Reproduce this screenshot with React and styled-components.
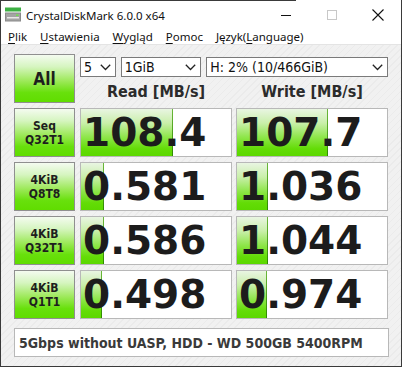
import React from 'react';
import styled, { createGlobalStyle } from 'styled-components';

const GlobalStyle = createGlobalStyle`
  body {
    margin: 0;
    background: #fff;
  }
`;

const rows = [
  { top: 'Seq', bottom: 'Q32T1', read: '108.4', write: '107.7', readFill: 91, writeFill: 90 },
  { top: '4KiB', bottom: 'Q8T8', read: '0.581', write: '1.036', readFill: 22, writeFill: 30 },
  { top: '4KiB', bottom: 'Q32T1', read: '0.586', write: '1.044', readFill: 22, writeFill: 30 },
  { top: '4KiB', bottom: 'Q1T1', read: '0.498', write: '0.974', readFill: 20, writeFill: 29 },
];

const menu = [
  { key: 'P', rest: 'lik' },
  { key: 'U', rest: 'stawienia' },
  { key: 'W', rest: 'ygląd' },
  { key: 'P', rest: 'omoc' },
  { before: 'Język(', key: 'L', rest: 'anguage)' },
];

const App = () => {
  return (
    <>
      <GlobalStyle />
      <StyledWindow>
        <StyledTitleBar>
          <AppIcon />
          <StyledTitle>CrystalDiskMark 6.0.0 x64</StyledTitle>
          <StyledControls>
            <StyledControl>
              <svg width='12' height='12' viewBox='0 0 12 12'>
                <line x1='1' y1='6.5' x2='11' y2='6.5' stroke='#111' strokeWidth='1' />
              </svg>
            </StyledControl>
            <StyledControl>
              <svg width='12' height='12' viewBox='0 0 12 12'>
                <rect x='1.5' y='1.5' width='9' height='9' fill='none' stroke='#c8c8c8' strokeWidth='1' />
              </svg>
            </StyledControl>
            <StyledControl>
              <svg width='14' height='14' viewBox='0 0 14 14'>
                <path d='M1.5 1.5 L12.5 12.5 M12.5 1.5 L1.5 12.5' stroke='#111' strokeWidth='1.1' />
              </svg>
            </StyledControl>
          </StyledControls>
        </StyledTitleBar>

        <StyledMenuBar>
          {menu.map((m, i) => (
            <StyledMenuItem key={i}>
              {m.before}
              <StyledAccel>{m.key}</StyledAccel>
              {m.rest}
            </StyledMenuItem>
          ))}
        </StyledMenuBar>

        <StyledContent>
          <StyledGrid>
            <StyledTestButton $big>All</StyledTestButton>
            <StyledTopArea>
              <StyledSelects>
                <Select width={36} label='5' />
                <Select width={81} label='1GiB' />
                <Select width={183} label='H: 2% (10/466GiB)' />
              </StyledSelects>
              <StyledHeaders>
                <StyledHeader>Read [MB/s]</StyledHeader>
                <StyledHeader>Write [MB/s]</StyledHeader>
              </StyledHeaders>
            </StyledTopArea>

            {rows.map((r, i) => (
              <React.Fragment key={i}>
                <StyledTestButton>
                  {r.top}
                  <br />
                  {r.bottom}
                </StyledTestButton>
                <StyledResult style={{ '--fill': `${r.readFill}px` }}>{r.read}</StyledResult>
                <StyledResult style={{ '--fill': `${r.writeFill}px` }}>{r.write}</StyledResult>
              </React.Fragment>
            ))}
          </StyledGrid>
          <StyledComment>5Gbps without UASP, HDD - WD 500GB 5400RPM</StyledComment>
        </StyledContent>
      </StyledWindow>
    </>
  );
};

const Select = ({ width, label }) => (
  <StyledSelect width={width}>
    <span>{label}</span>
    <svg width='11' height='7' viewBox='0 0 11 7'>
      <polyline points='0.8,0.8 5.5,5.5 10.2,0.8' fill='none' stroke='#222' strokeWidth='1.3' />
    </svg>
  </StyledSelect>
);

const AppIcon = () => (
  <svg width='16' height='16' viewBox='0 0 16 16' style={{ marginLeft: 4, marginRight: 5 }}>
    <rect x='0' y='0.5' width='16' height='4' fill='#3cb043' />
    <rect x='0' y='5.5' width='16' height='9' fill='#8a8a8a' />
    <rect x='1' y='6.5' width='14' height='7' fill='#a4a4a4' />
    <rect x='2' y='10' width='12' height='1.5' fill='#e8e8e8' />
    <rect x='11' y='7.5' width='2.5' height='1.5' fill='#6fe04a' />
  </svg>
);

const StyledWindow = styled.div`
  width: 402px;
  height: 367px;
  box-sizing: border-box;
  border-left: 1px solid #3a3a3a;
  border-right: 1px solid #3a3a3a;
  border-bottom: 1px solid #3a3a3a;
  display: flex;
  flex-direction: column;
  background: #fff;
  overflow: hidden;
`;

const StyledTitleBar = styled.div`
  height: 30px;
  flex: none;
  display: flex;
  align-items: center;
  background: linear-gradient(#3a3a3a, #3a3a3a) no-repeat 0 0 / 295px 1px, #fff;
  font-family: 'Noto Sans', 'Open Sans', sans-serif;
  font-size: 11.5px;
  color: #111;
`;

const StyledTitle = styled.div`
  flex: 1;
`;

const StyledControls = styled.div`
  display: flex;
  height: 100%;
`;

const StyledControl = styled.div`
  width: 46px;
  display: flex;
  align-items: center;
  justify-content: center;
`;

const StyledMenuBar = styled.div`
  height: 14px;
  flex: none;
  display: flex;
  gap: 13px;
  padding-left: 7px;
  background: #fff;
  font-family: 'Noto Sans', 'Open Sans', sans-serif;
  font-size: 11.5px;
  line-height: 14px;
  color: #111;
`;

const StyledMenuItem = styled.div`
  white-space: nowrap;
`;

const StyledAccel = styled.span`
  text-decoration: underline;
  text-underline-offset: 2px;
`;

const StyledContent = styled.div`
  flex: 1;
  border-top: 1px solid #e4e4e4;
  padding: 9px 12px 0 13px;
  background:
    repeating-linear-gradient(-45deg, #f1f1f1 0 4px, #ebebeb 4px 5px),
    #f0f0f0;
`;

const StyledGrid = styled.div`
  display: grid;
  grid-template-columns: 62px 152px 152px;
  grid-auto-rows: 49px;
  column-gap: 4px;
  row-gap: 5px;
`;

const StyledTestButton = styled.div`
  width: 61px;
  box-sizing: border-box;
  border: 1px solid #8f8f8f;
  display: flex;
  align-items: center;
  justify-content: center;
  text-align: center;
  background: linear-gradient(to bottom, #f4fbf0 0%, #d6f5c0 25%, #9de95a 55%, #68e00c 80%, #60dd00 100%);
  font-family: 'DejaVu Sans Condensed', 'DejaVu Sans', sans-serif;
  font-stretch: condensed;
  font-weight: bold;
  font-size: ${({ $big }) => ($big ? '17px' : '12px')};
  line-height: 14px;
  color: #1e1e1e;
`;

const StyledTopArea = styled.div`
  grid-column: 2 / 4;
  display: flex;
  flex-direction: column;
`;

const StyledSelects = styled.div`
  display: flex;
  gap: 5px;
  margin-top: 3px;
`;

const StyledSelect = styled.div`
  width: ${({ width }) => width}px;
  height: 20px;
  box-sizing: border-box;
  border: 1px solid #7a7a7a;
  background: #fff;
  display: flex;
  align-items: center;
  justify-content: space-between;
  padding: 0 4px 0 3px;
  font-family: 'DejaVu Sans Condensed', 'DejaVu Sans', sans-serif;
  font-stretch: condensed;
  font-size: 14px;
  color: #111;
`;

const StyledHeaders = styled.div`
  flex: 1;
  display: grid;
  grid-template-columns: 152px 152px;
  column-gap: 4px;
  align-items: center;
`;

const StyledHeader = styled.div`
  text-align: center;
  font-family: 'DejaVu Sans Condensed', 'DejaVu Sans', sans-serif;
  font-stretch: condensed;
  font-weight: bold;
  font-size: 16px;
  color: #2b2b2b;
  padding-top: 2px;
`;

const StyledResult = styled.div`
  box-sizing: border-box;
  border: 1px solid #b8b8b8;
  display: flex;
  align-items: center;
  padding-left: 2px;
  background:
    linear-gradient(to bottom, #6bb83a, #2f8a00) no-repeat var(--fill) 0 / 1px 100%,
    linear-gradient(to bottom, #e9f5e2 0%, #c9efaa 30%, #8ee64a 60%, #63dc06 85%, #5cd800 100%) no-repeat 0 0 / var(--fill) 100%,
    #fff;
  font-family: 'DejaVu Sans', sans-serif;
  font-weight: bold;
  font-size: 39px;
  line-height: 1;
  color: #1c1c1c;
`;

const StyledComment = styled.div`
  margin-top: 9px;
  height: 29px;
  box-sizing: border-box;
  border: 1px solid #b8b8b8;
  background: #fff;
  display: flex;
  align-items: center;
  padding-left: 4px;
  font-family: 'DejaVu Sans Condensed', 'DejaVu Sans', sans-serif;
  font-stretch: condensed;
  font-weight: bold;
  font-size: 14px;
  color: #3a3a3a;
`;

export default App;
